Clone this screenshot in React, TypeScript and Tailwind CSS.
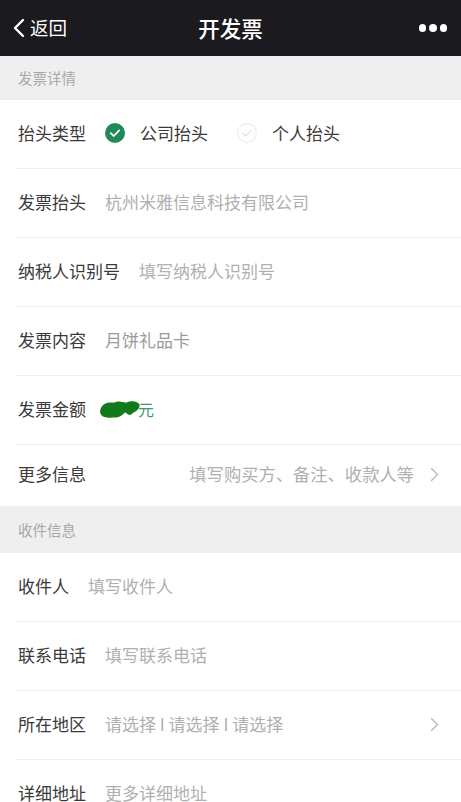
import React from "react";

const font = { fontFamily: '"Noto Sans CJK SC", "Noto Sans", sans-serif' };

function Chevron({ className = "" }: { className?: string }) {
  return (
    <svg width="9" height="15" viewBox="0 0 9 15" className={className}>
      <path d="M1.5 1.5 L7.5 7.5 L1.5 13.5" fill="none" stroke="#b8b8b8" strokeWidth="1.4" strokeLinecap="round" strokeLinejoin="round" />
    </svg>
  );
}

function Row({
  label,
  value,
  last,
  arrow,
  h = "h-[69px]",
}: {
  label: string;
  value?: React.ReactNode;
  last?: boolean;
  arrow?: boolean;
  h?: string;
}) {
  return (
    <div className={`flex items-center ${h} pl-[18px] pr-[22px] pb-[3px] bg-white relative`}>
      <span className="text-[17px] text-[#3a3a3a] mr-[19px] whitespace-nowrap">{label}</span>
      <div className="flex-1 flex items-center text-[17px] text-[#b0b0b0] whitespace-nowrap">{value}</div>
      {arrow && <Chevron className="ml-2" />}
      {!last && <div className="absolute left-[16px] right-0 bottom-0 h-px bg-[#efefef]" />}
    </div>
  );
}

function Section({ title, h }: { title: string; h: string }) {
  return (
    <div className={`${h} bg-[#efefef] flex items-center pl-[18px] text-[14.5px] text-[#a8a8a8]`}>{title}</div>
  );
}

export default function App() {
  return (
    <div className="w-[461px] h-[802px] overflow-hidden bg-white" style={font}>
      <div className="h-[56px] bg-[#1b1a1f] flex items-center relative">
        <div className="flex items-center pl-[12px]">
          <svg width="14" height="20" viewBox="0 0 14 20">
            <path d="M11 2 L3 10 L11 18" fill="none" stroke="white" strokeWidth="2.4" strokeLinecap="round" strokeLinejoin="round" />
          </svg>
          <span className="text-white text-[18.5px] ml-[4px]">返回</span>
        </div>
        <div className="absolute left-0 right-0 text-center text-white text-[21.5px] font-medium pointer-events-none">开发票</div>
        <div className="ml-auto pr-[14px] flex items-center gap-[3px]">
          <span className="w-[7.5px] h-[7.5px] rounded-full bg-white" />
          <span className="w-[7.5px] h-[7.5px] rounded-full bg-white" />
          <span className="w-[7.5px] h-[7.5px] rounded-full bg-white" />
        </div>
      </div>
      <Section title="发票详情" h="h-[44px]" />
      <Row
        label="抬头类型"
        value={
          <div className="flex items-center text-[#3a3a3a]">
            <svg width="20" height="20" viewBox="0 0 20 20">
              <circle cx="10" cy="10" r="10" fill="#1e8a55" />
              <path d="M5.8 10.2 L8.8 13 L14.2 7.4" fill="none" stroke="white" strokeWidth="1.8" strokeLinecap="round" strokeLinejoin="round" />
            </svg>
            <span className="ml-[15px]">公司抬头</span>
            <svg width="20" height="20" viewBox="0 0 20 20" className="ml-[29px]">
              <circle cx="10" cy="10" r="9.3" fill="none" stroke="#ececec" strokeWidth="1.2" />
              <path d="M5.8 10.2 L8.8 13 L14.2 7.4" fill="none" stroke="#e2e2e2" strokeWidth="1.2" strokeLinecap="round" strokeLinejoin="round" />
            </svg>
            <span className="ml-[15px]">个人抬头</span>
          </div>
        }
      />
      <Row label="发票抬头" value="杭州米雅信息科技有限公司" />
      <Row label="纳税人识别号" value="填写纳税人识别号" />
      <Row label="发票内容" value={<span className="text-[#9a9a9a]">月饼礼品卡</span>} />
      <Row
        label="发票金额"
        value={
          <div className="flex items-center -ml-[6px]">
            <svg width="42" height="22" viewBox="0 0 40 20">
              <path d="M1 12 C2 5 8 3 14 4 C18 2 22 3 26 4 C30 2 36 2 38.5 5.5 C39.5 9 36 12 32 14 C30 17 27 15 25 13 C22 16 18 19 13 18 C7 19 1 18 1 12 Z" fill="#137a1c" />
            </svg>
            <span className="text-[#3d9b6a] text-[16px] -ml-[3px]">元</span>
          </div>
        }
      />
      <Row
        label="更多信息"
        h="h-[61px]"
        last
        arrow
        value={<span className="ml-auto mr-[8px] text-[17.3px]">填写购买方、备注、收款人等</span>}
      />
      <Section title="收件信息" h="h-[47px]" />
      <Row label="收件人" value="填写收件人" />
      <Row label="联系电话" value="填写联系电话" />
      <Row label="所在地区" value="请选择 I 请选择 I 请选择" arrow />
      <Row label="详细地址" value="更多详细地址" last />
    </div>
  );
}
